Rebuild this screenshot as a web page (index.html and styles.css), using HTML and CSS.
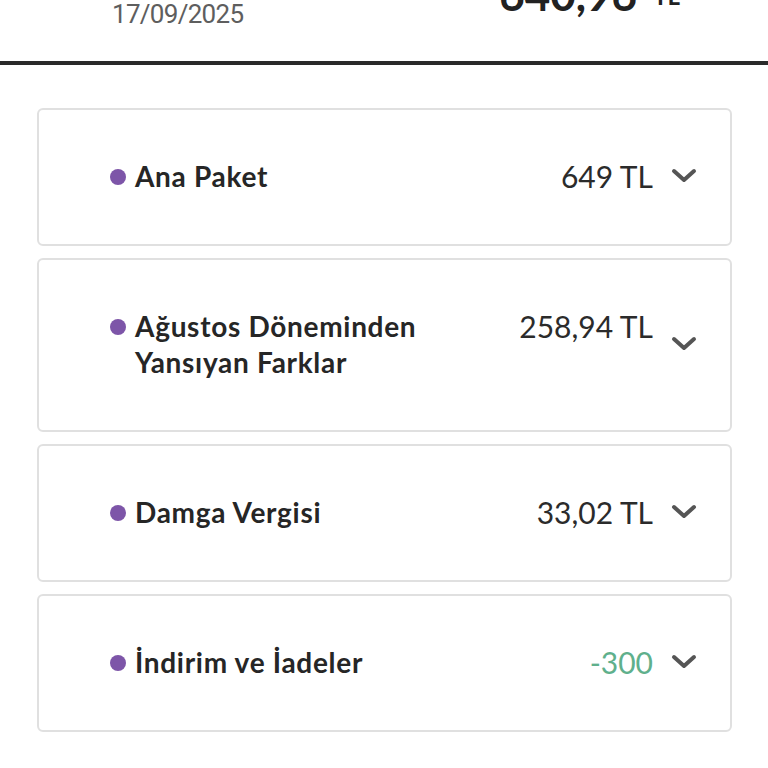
FILE: index.html
```html
<!DOCTYPE html>
<html lang="tr">
<head>
    <meta charset="UTF-8">
    <meta name="viewport" content="width=device-width, initial-scale=1.0">
    <title>Fatura Detayı</title>
    <link rel="stylesheet" href="styles.css">
</head>
<body>
    <div class="summary">
        <div class="date">17/09/2025</div>
        <div class="total">640,96<span class="currency">TL</span></div>
    </div>

    <div class="items">
        <div class="item">
            <div class="item-row">
                <div class="label"><span class="dot"></span><span class="label-text">Ana Paket</span></div>
                <div class="value">649 TL</div>
            </div>
            <svg class="chevron" width="26" height="16" viewBox="0 0 26 16"><polyline points="3,3 13,12 23,3" fill="none" stroke="#555" stroke-width="4" stroke-linecap="round" stroke-linejoin="round"/></svg>
        </div>

        <div class="item">
            <div class="item-row">
                <div class="label"><span class="dot"></span><span class="label-text">Ağustos Döneminden Yansıyan Farklar</span></div>
                <div class="value">258,94 TL</div>
            </div>
            <svg class="chevron" width="26" height="16" viewBox="0 0 26 16"><polyline points="3,3 13,12 23,3" fill="none" stroke="#555" stroke-width="4" stroke-linecap="round" stroke-linejoin="round"/></svg>
        </div>

        <div class="item">
            <div class="item-row">
                <div class="label"><span class="dot"></span><span class="label-text">Damga Vergisi</span></div>
                <div class="value">33,02 TL</div>
            </div>
            <svg class="chevron" width="26" height="16" viewBox="0 0 26 16"><polyline points="3,3 13,12 23,3" fill="none" stroke="#555" stroke-width="4" stroke-linecap="round" stroke-linejoin="round"/></svg>
        </div>

        <div class="item">
            <div class="item-row">
                <div class="label"><span class="dot"></span><span class="label-text">İndirim ve İadeler</span></div>
                <div class="value discount">-300</div>
            </div>
            <svg class="chevron" width="26" height="16" viewBox="0 0 26 16"><polyline points="3,3 13,12 23,3" fill="none" stroke="#555" stroke-width="4" stroke-linecap="round" stroke-linejoin="round"/></svg>
        </div>
    </div>
</body>
</html>
```

FILE: styles.css
```css
body {
    margin: 0;
    padding: 0;
    font-family: Lato, "Noto Sans", sans-serif;
    background: #fff;
    color: #222;
}

.summary {
    display: flex;
    justify-content: space-between;
    align-items: flex-start;
    height: 61px;
    padding: 0 88px 0 112px;
    border-bottom: 4px solid #2a2a2a;
    overflow: hidden;
}

.date {
    font-family: Roboto, sans-serif;
    font-size: 26px;
    line-height: 30px;
    letter-spacing: -0.7px;
    color: #5e5e5e;
    margin-top: -1px;
}

.total {
    font-size: 44px;
    font-weight: bold;
    line-height: 44px;
    margin-top: -28px;
    color: #222;
}

.currency {
    font-size: 24px;
    line-height: 0;
    vertical-align: 6px;
    margin-left: 16px;
}

.items {
    display: flex;
    flex-direction: column;
    gap: 12px;
    padding: 43px 36px 20px 37px;
}

.item {
    display: flex;
    align-items: center;
    border: 2px solid #e0e0e0;
    border-radius: 6px;
    padding: 48px 33px 50px 71px;
}

.item-row {
    flex: 1;
    display: flex;
    justify-content: space-between;
    align-items: flex-start;
}

.label {
    display: flex;
    align-items: flex-start;
    max-width: 320px;
}

.dot {
    flex: none;
    width: 16px;
    height: 16px;
    border-radius: 50%;
    background: #7d55a8;
    margin: 11px 9px 0 0;
}

.label-text {
    font-size: 28px;
    font-weight: bold;
    line-height: 36px;
    letter-spacing: 0.7px;
    color: #262626;
}

.value {
    font-size: 30px;
    line-height: 36px;
    color: #2b2b2b;
    margin-right: 18px;
}

.value.discount {
    color: #5fb08c;
}

.chevron {
    flex: none;
    display: block;
}
```
